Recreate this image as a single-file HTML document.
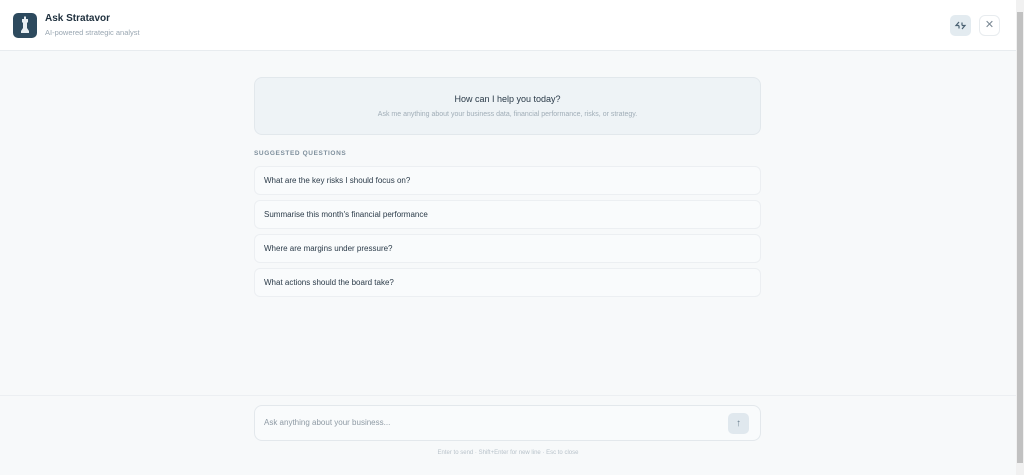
<!DOCTYPE html>
<html><head><meta charset="utf-8"><style>
*{box-sizing:border-box;margin:0;padding:0}
body{width:1024px;height:475px;overflow:hidden;background:#f7f9fa;font-family:"Liberation Sans",sans-serif;position:relative}
.hdr{position:absolute;left:0;top:0;width:1016px;height:51px;background:#fff;border-bottom:1px solid #e8ecef}
.logo{position:absolute;left:13px;top:13px;width:24px;height:25px;border-radius:5px;background:#2d4a5e}
.t1{position:absolute;left:45px;top:13px;font-size:10px;font-weight:bold;color:#1e2f3d}
.t2{position:absolute;left:45px;top:28px;font-size:7.5px;color:#9aa7b2}
.b1{position:absolute;left:950px;top:15px;width:21px;height:21px;border-radius:5px;background:#e3ebf0}
.b2{position:absolute;left:979px;top:15px;width:21px;height:21px;border-radius:6px;background:#fff;border:1px solid #e8ecef;color:#7a8894;font-size:11px;text-align:center;line-height:19px}
.sb{position:absolute;left:1016px;top:0;width:8px;height:475px;background:#f1f1f1}
.sb div{position:absolute;left:1px;top:12px;width:6px;height:451px;background:#c1c1c1}
.hero{position:absolute;left:254px;top:77px;width:507px;height:58px;border-radius:8px;background:#eef3f6;border:1px solid #e2e8ec;text-align:center}
.hero .a{margin-top:16px;font-size:9px;color:#2a3a48}
.hero .b{margin-top:7px;font-size:7px;color:#a0adb7}
.sq{position:absolute;left:254px;top:150px;font-size:6.5px;font-weight:bold;letter-spacing:.6px;color:#7e8f9c}
.q{position:absolute;left:254px;width:507px;height:29px;border-radius:6px;background:#f9fbfc;border:1px solid #eceff2;font-size:8px;color:#2a3a48;padding-left:9px;line-height:27px}
.foot{position:absolute;left:0;top:395px;width:1016px;height:80px;border-top:1px solid #eceff2;background:#f7f9fa}
.inp{position:absolute;left:254px;top:405px;width:507px;height:36px;border-radius:8px;background:#f9fbfc;border:1px solid #e3e8ec;font-size:8px;color:#8e9aa4;padding-left:9px;line-height:34px}
.send{position:absolute;left:728px;top:413px;width:21px;height:21px;border-radius:5px;background:#e0e8ee;color:#6b7f8e;font-size:10px;text-align:center;line-height:21px}
.hint{position:absolute;left:0;width:1016px;top:450px;text-align:center;font-size:6px;color:#b8c2ca}
</style></head><body>
<div class="hdr">
<div class="logo"><svg width="24" height="25" viewBox="0 0 24 25"><path d="M9 6h6v3l-1 1v5l2 3v2H8v-2l2-3v-5l-1-1z" fill="#e8eef2"/><rect x="11" y="3.5" width="2" height="3" fill="#e8eef2"/></svg></div>
<div class="t1">Ask Stratavor</div>
<div class="t2">AI-powered strategic analyst</div>
<div class="b1"><svg width="21" height="21" viewBox="0 0 21 21" fill="none" stroke="#4a6172" stroke-width="1.2"><path d="M9 7l-3 3.5h3M12 14l3-3.5h-3M9 10.5v3M12 10.5v-3"/></svg></div>
<div class="b2">✕</div>
</div>
<div class="sb"><div></div></div>
<div class="hero"><div class="a">How can I help you today?</div><div class="b">Ask me anything about your business data, financial performance, risks, or strategy.</div></div>
<div class="sq">SUGGESTED QUESTIONS</div>
<div class="q" style="top:166px">What are the key risks I should focus on?</div>
<div class="q" style="top:200px">Summarise this month's financial performance</div>
<div class="q" style="top:234px">Where are margins under pressure?</div>
<div class="q" style="top:268px">What actions should the board take?</div>
<div class="foot"></div>
<div class="inp">Ask anything about your business...</div>
<div class="send">↑</div>
<div class="hint">Enter to send · Shift+Enter for new line · Esc to close</div>
</body></html>
